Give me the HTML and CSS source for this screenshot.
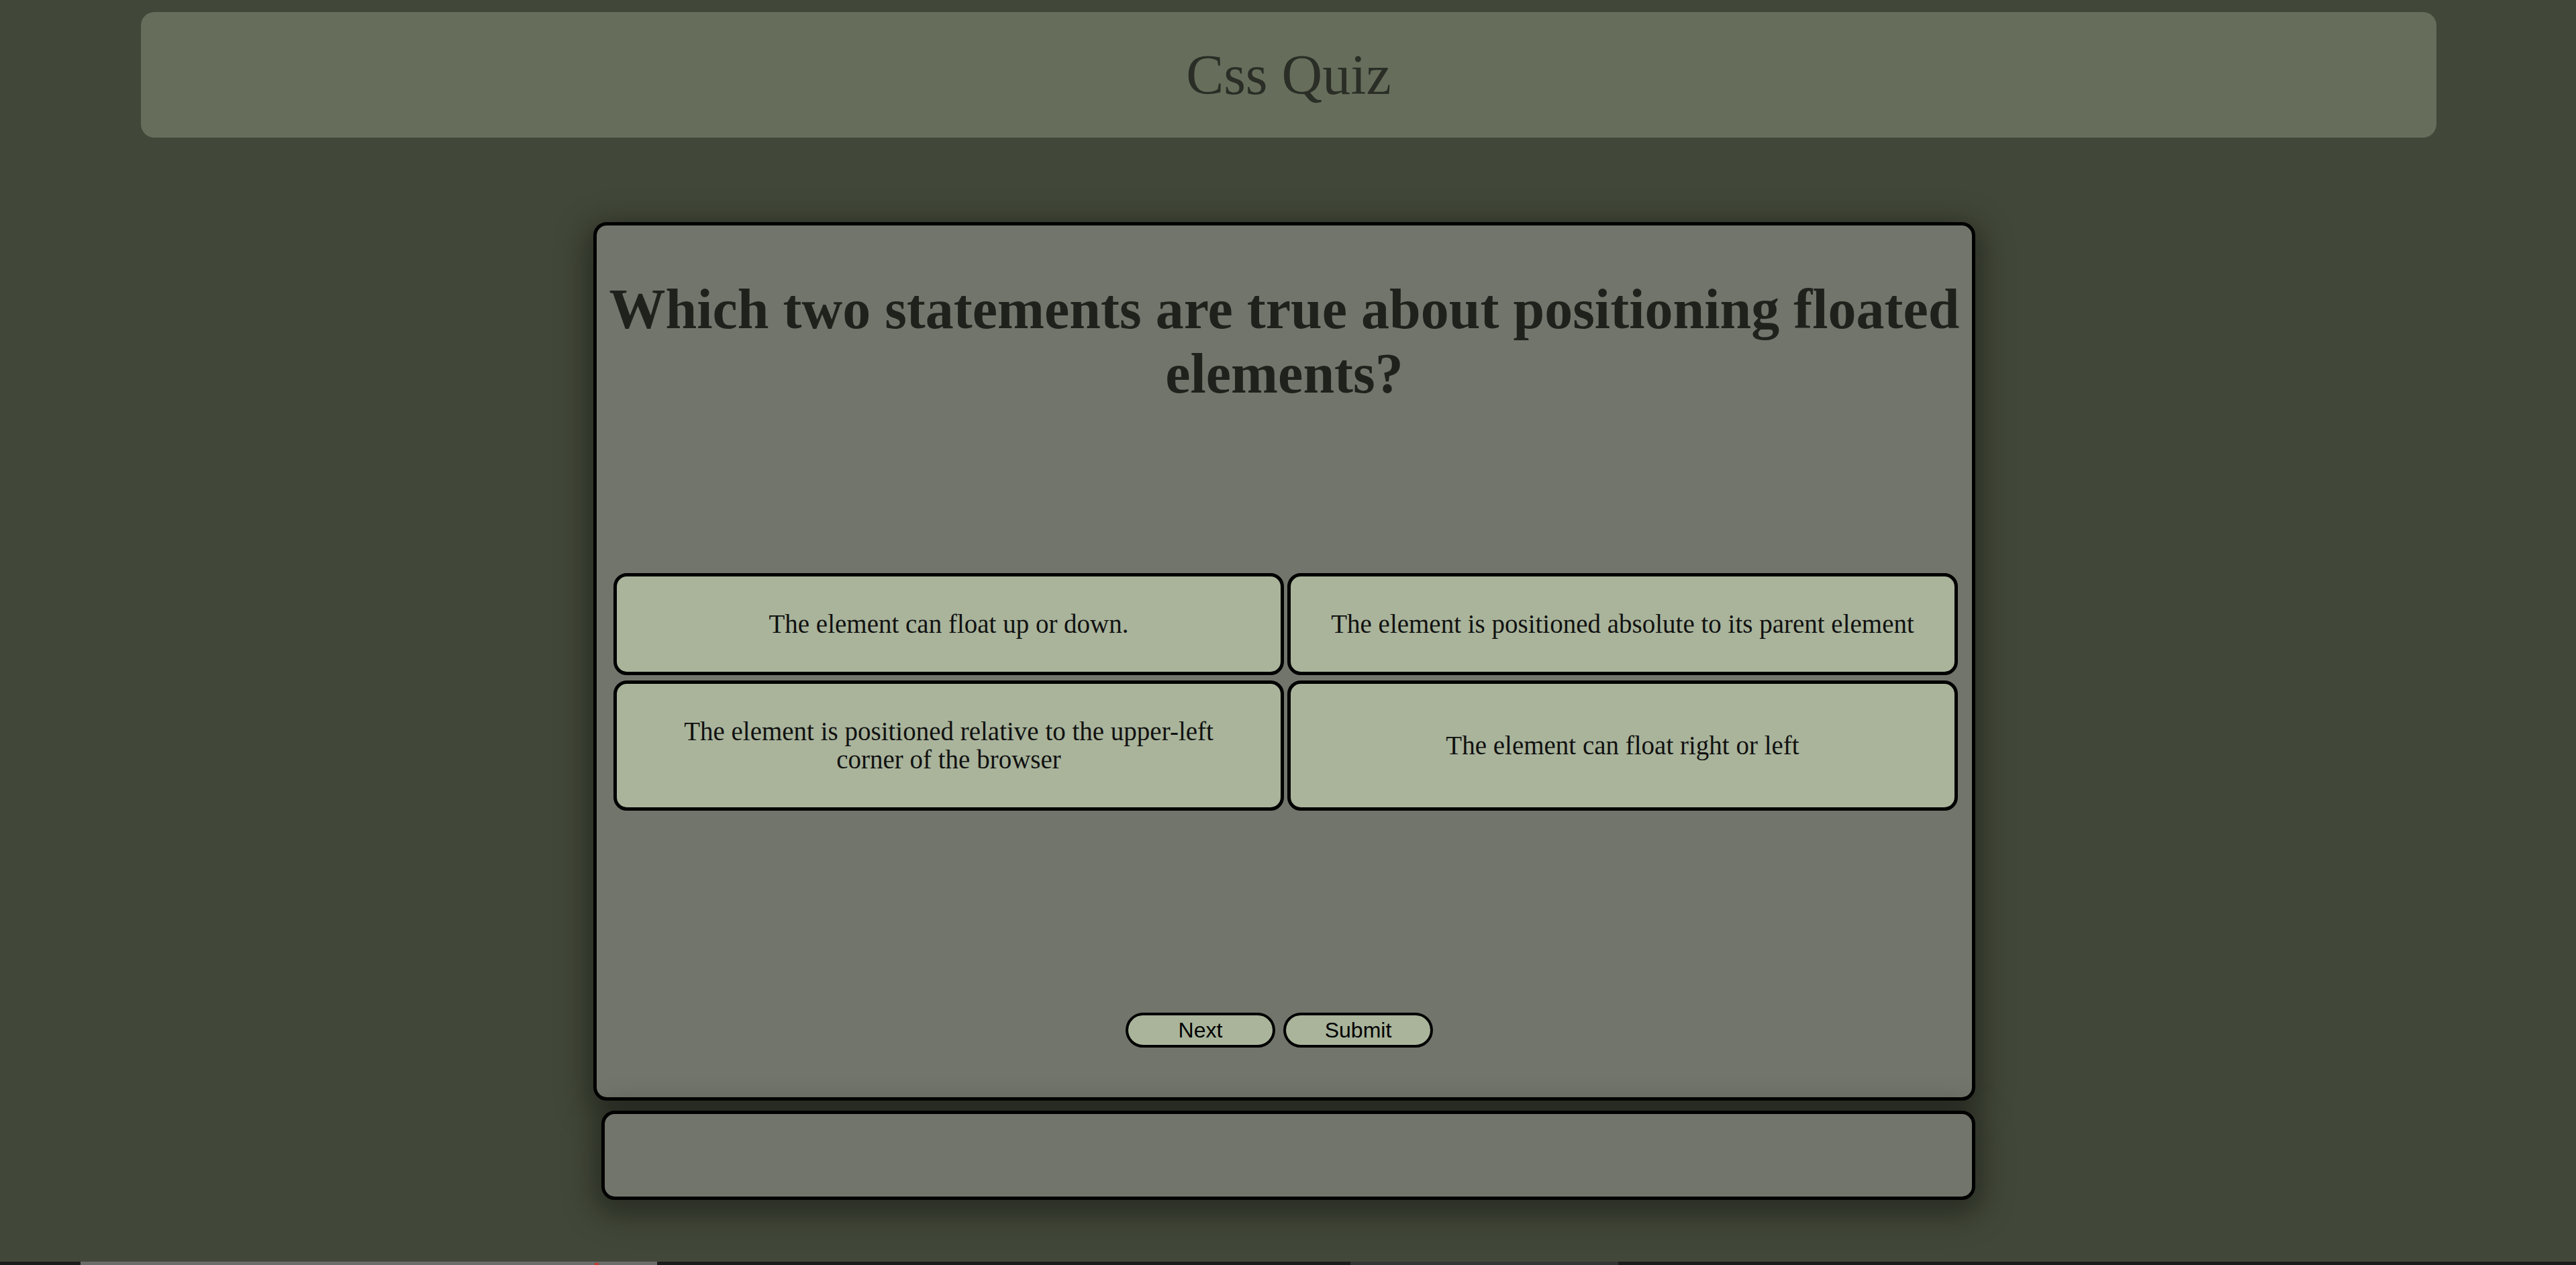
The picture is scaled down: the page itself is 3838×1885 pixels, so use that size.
FILE: index.html
```html
<!DOCTYPE html>
<html lang="en">
<head>
<meta charset="utf-8">
<title>Css Quiz</title>
<link rel="stylesheet" href="styles.css">
</head>
<body>
  <header class="top">
    <h1 class="title">Css Quiz</h1>
  </header>
  <main class="wrap">
    <section class="card quiz">
      <h2 class="question">Which two statements are true about positioning floated elements?</h2>
      <div class="answers">
        <button class="answer">The element can float up or down.</button>
        <button class="answer">The element is positioned absolute to its parent element</button>
        <button class="answer">The element is positioned relative to the upper-left corner of the browser</button>
        <button class="answer">The element can float right or left</button>
      </div>
      <div class="controls">
        <button class="ctrl">Next</button>
        <button class="ctrl">Submit</button>
      </div>
    </section>
    <section class="card result"></section>
  </main>
  <div class="taskbar">
    <span class="seg seg-a"><i class="dot"></i></span>
    <span class="seg seg-gap1"></span>
    <span class="seg seg-b"></span>
  </div>
</body>
</html>
```
FILE: styles.css
```css
html, body {
  margin: 0;
  padding: 0;
}
body {
  background: #424839;
  min-height: 1885px;
  font-family: "Liberation Serif", "DejaVu Serif", serif;
  overflow: hidden;
}
.top {
  margin: 18px 208px 0 210px;
  height: 187px;
  background: #666e5b;
  border-radius: 20px;
  display: flex;
  align-items: center;
  justify-content: center;
}
.title {
  margin: 0;
  font-weight: 400;
  font-size: 84px;
  color: #2a2e26;
  line-height: 1;
}
.wrap {
  width: 2059px;
  margin: 126px 0 0 884px;
}
.card {
  box-sizing: border-box;
  background: #71756b;
  border: 5px solid #000;
  border-radius: 20px;
  box-shadow: 0 12px 45px 12px rgba(0, 0, 0, 0.38);
}
.quiz {
  height: 1309px;
  display: flex;
  flex-direction: column;
}
.question {
  margin: 77px 8px 0 8px;
  font-size: 84px;
  line-height: 96px;
  font-weight: 700;
  text-align: center;
  color: #1f221c;
}
.answers {
  margin: 249px 21px 0 25px;
  display: grid;
  grid-template-columns: 1fr 1fr;
  column-gap: 5px;
  row-gap: 8px;
}
.answer {
  box-sizing: border-box;
  display: flex;
  align-items: center;
  justify-content: center;
  padding: 50px 54px;
  background: #a9b49b;
  border: 5px solid #000;
  border-radius: 20px;
  font-family: "Liberation Serif", "DejaVu Serif", serif;
  font-size: 39px;
  line-height: 42px;
  color: #111;
  text-align: center;
}
.controls {
  margin-top: 301px;
  display: flex;
  justify-content: center;
  gap: 12px;
  padding-right: 15px;
}
.ctrl {
  box-sizing: border-box;
  width: 223px;
  height: 52px;
  background: #a9b49b;
  border: 4px solid #000;
  border-radius: 26px;
  font-family: "Liberation Sans", Arial, sans-serif;
  font-size: 32px;
  line-height: 1;
  color: #000;
  padding: 0;
}
.result {
  margin: 15px 0 0 12px;
  height: 133px;
}
.taskbar {
  position: fixed;
  left: 0;
  right: 0;
  bottom: 0;
  height: 5px;
  background: #1c1c1c;
  display: flex;
}
.seg {
  display: block;
  height: 5px;
}
.seg-a {
  margin-left: 120px;
  width: 859px;
  background: #6c6c6c;
  position: relative;
}
.dot {
  position: absolute;
  left: 766px;
  bottom: 0;
  width: 6px;
  height: 3px;
  background: #c0392b;
}
.seg-gap1 {
  width: 1033px;
}
.seg-b {
  width: 399px;
  background: #343434;
}
```
